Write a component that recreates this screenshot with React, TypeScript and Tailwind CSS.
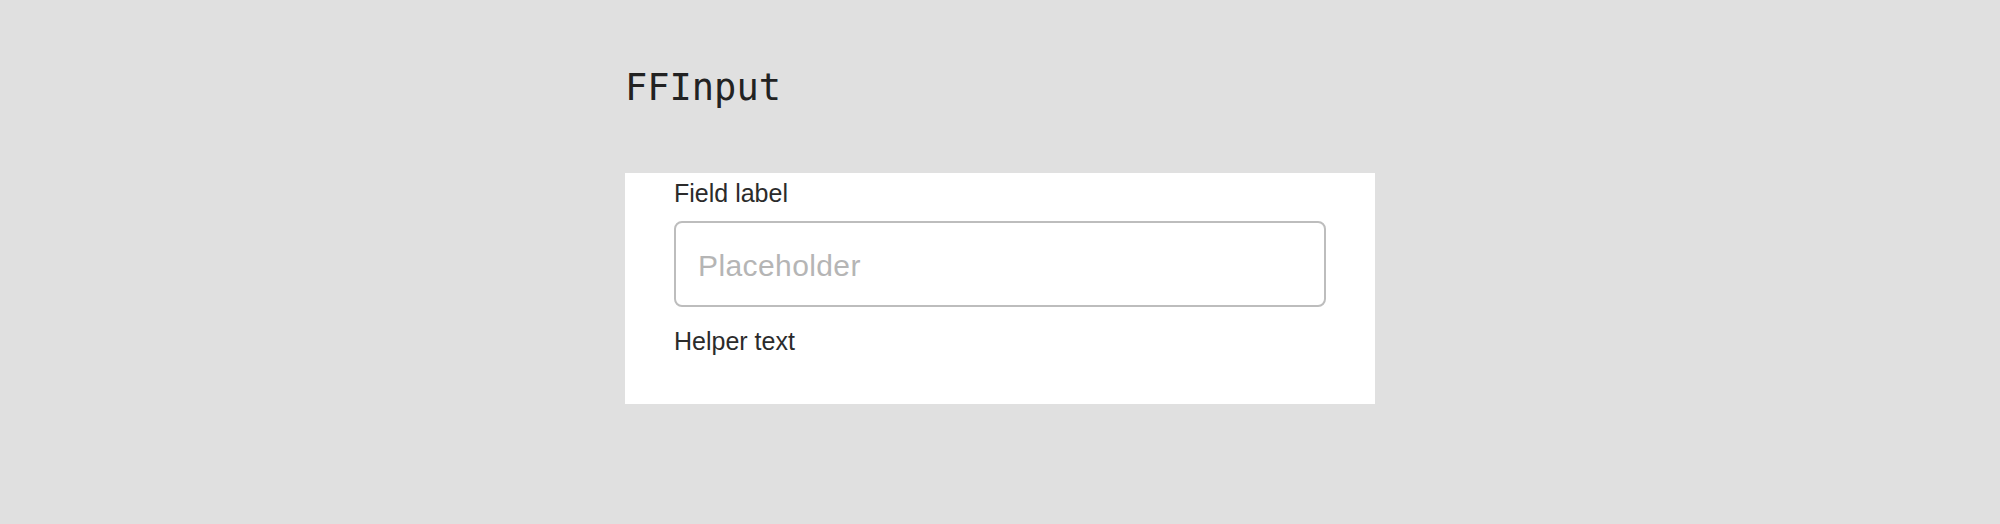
import { useState } from 'react';

function FFInput() {
  const [value, setValue] = useState('');

  return (
    <div className="bg-white px-[49px] pt-[6px] pb-[49px]">
      <label
        htmlFor="ff-input"
        className="block text-[25px] leading-[28px] text-[#2b2b2b]"
      >
        Field label
      </label>
      <input
        id="ff-input"
        type="text"
        value={value}
        onChange={(e) => setValue(e.target.value)}
        placeholder="Placeholder"
        className="mt-[14px] block w-full h-[86px] px-[22px] pt-[4px] rounded-[8px] border-2 border-[#bdbdbd] bg-white text-[30px] tracking-[0.4px] text-[#2b2b2b] placeholder:text-[#b5b5b5] outline-none"
      />
      <p className="mt-[20px] text-[25px] leading-[28px] text-[#2b2b2b]">
        Helper text
      </p>
    </div>
  );
}

export default function App() {
  return (
    <div
      className="min-h-screen bg-[#e0e0e0] flex justify-center"
      style={{ fontFamily: '"Liberation Sans", Arial, sans-serif' }}
    >
      <div className="w-[750px] pt-[66px]">
        <h1
          className="text-[37px] leading-[43px] text-[#222222] mb-[64px]"
          style={{ fontFamily: '"DejaVu Sans Mono", monospace' }}
        >
          FFInput
        </h1>
        <FFInput />
      </div>
    </div>
  );
}
